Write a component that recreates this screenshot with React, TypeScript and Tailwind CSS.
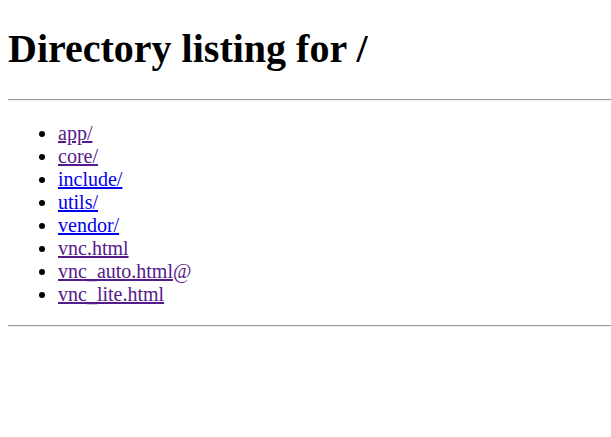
const entries = [
  { name: 'app/', visited: true },
  { name: 'core/', visited: true },
  { name: 'include/', visited: false },
  { name: 'utils/', visited: false },
  { name: 'vendor/', visited: false },
  { name: 'vnc.html', visited: true },
  { name: 'vnc_auto.html', visited: true, link: true },
  { name: 'vnc_lite.html', visited: true },
];

export default function App() {
  return (
    <div
      className="min-h-screen bg-white pl-2 text-[20px] leading-[23px] text-black"
      style={{ fontFamily: '"Liberation Serif", "Times New Roman", serif' }}
    >
      <h1 className="pt-[26px] pb-[27px] text-[40px] font-bold leading-[46px]">Directory listing for /</h1>
      <hr className="border-t border-b border-t-[#9a9a9a] border-b-[#eeeeee]" />
      <ul className="list-disc pt-[21px] pb-[19px] pl-[50px]">
        {entries.map((e) => (
          <li key={e.name}>
            <a
              href="#"
              className={`underline ${e.visited ? 'text-[#551a8b]' : 'text-[#0000ee]'}`}
            >
              {e.name}
            </a>
            {e.link && <span className="text-[#551a8b]">@</span>}
          </li>
        ))}
      </ul>
      <hr className="border-t border-b border-t-[#9a9a9a] border-b-[#eeeeee]" />
    </div>
  );
}
